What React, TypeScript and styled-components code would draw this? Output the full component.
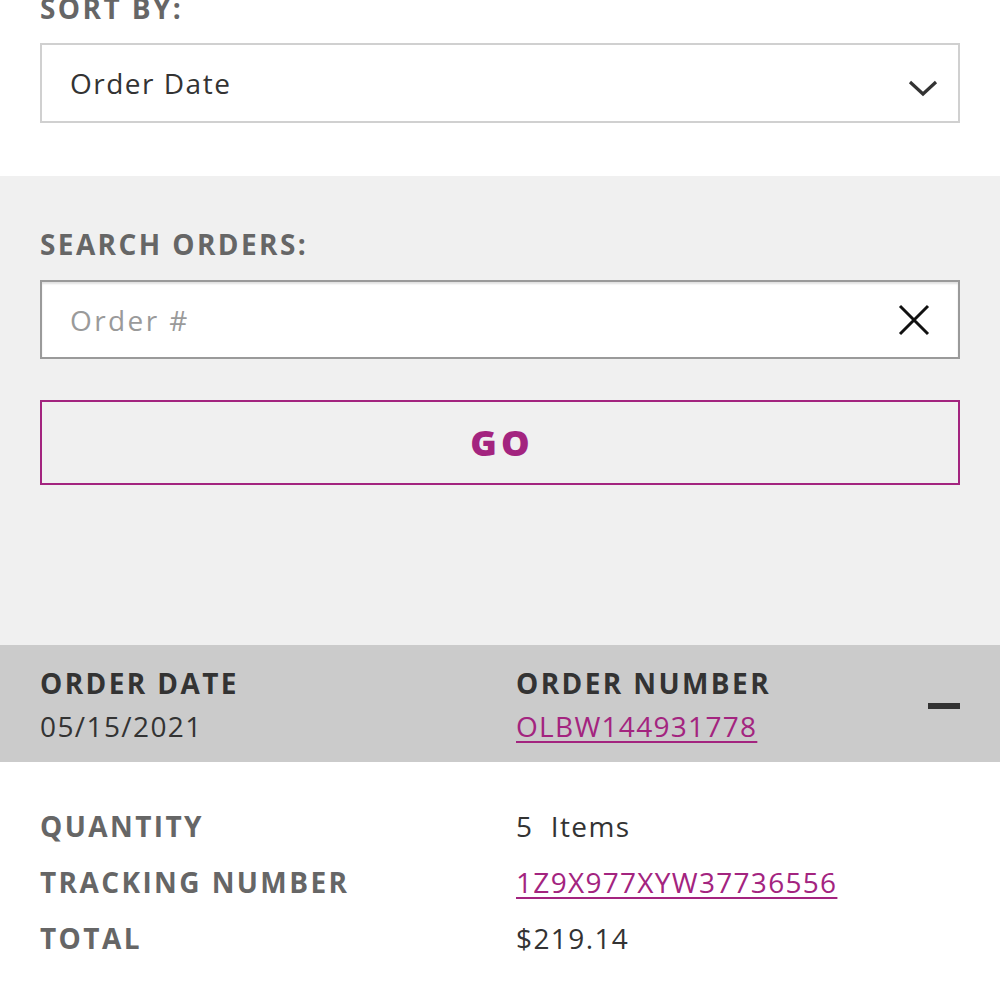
import React, { useState } from "react";
import styled, { createGlobalStyle } from "styled-components";

const GlobalStyle = createGlobalStyle`
  body {
    margin: 0;
    background: #ffffff;
    font-family: "Open Sans", "Liberation Sans", sans-serif;
  }
`;

const PURPLE = "#a3247f";

const Page = styled.div`
  width: 1000px;
  overflow: hidden;
`;

const SortSection = styled.div`
  margin-top: -10px;
  padding: 0 40px 53px;
`;

const Label = styled.div<{ $tone?: string }>`
  font-size: 28px;
  font-weight: 700;
  line-height: 36px;
  letter-spacing: 2.4px;
  color: ${(p) => p.$tone || "#666666"};
`;

const SelectBox = styled.div`
  margin-top: 17px;
  height: 76px;
  border: 2px solid #d0d0d0;
  background: #fff;
  display: flex;
  align-items: center;
  justify-content: space-between;
  padding: 0 20px 0 28px;
`;

const BoxText = styled.span<{ $placeholder?: boolean }>`
  font-size: 28px;
  letter-spacing: ${(p) => (p.$placeholder ? "2.4px" : "1.5px")};
  color: ${(p) => (p.$placeholder ? "#9a9a9a" : "#333333")};
`;

const SearchSection = styled.div`
  background: #f0f0f0;
  padding: 50px 40px 160px;
`;

const SearchInput = styled.div`
  margin-top: 18px;
  height: 75px;
  border: 2px solid #9a9a9a;
  background: #fff;
  display: flex;
  align-items: center;
  justify-content: space-between;
  padding: 0 28px 0 28px;
  box-shadow: inset 0 2px 2px rgba(0, 0, 0, 0.12);
`;

const GoButton = styled.button`
  display: block;
  width: 100%;
  margin-top: 41px;
  height: 85px;
  border: 2px solid ${PURPLE};
  background: transparent;
  color: ${PURPLE};
  font-family: inherit;
  font-size: 36px;
  font-weight: 800;
  letter-spacing: 4px;
  padding: 0 0 0 4px;
  cursor: pointer;
`;

const OrderHeader = styled.div`
  background: #cbcbcb;
  height: 117px;
  box-sizing: border-box;
  padding: 20px 40px 0;
  display: grid;
  grid-template-columns: 476px 1fr 32px;
  align-items: start;
`;

const HeaderCol = styled.div`
  display: flex;
  flex-direction: column;
  gap: 4px;
`;

const Value = styled.span`
  font-size: 28px;
  line-height: 42px;
  letter-spacing: 1.4px;
  color: #333333;
`;

const LinkValue = styled.a`
  font-size: 28px;
  line-height: 42px;
  letter-spacing: 1.3px;
  color: ${PURPLE};
  text-decoration: underline;
  text-underline-offset: 4px;
  text-decoration-thickness: 2px;
`;

const MinusBar = styled.div`
  width: 32px;
  height: 6px;
  background: #333333;
  margin-top: 38px;
`;

const Details = styled.div`
  padding: 36px 40px 30px;
  display: grid;
  grid-template-columns: 476px 1fr;
  grid-auto-rows: 56px;
  align-items: center;
`;

const IconSlot = styled.span<{ $shift?: number }>`
  display: flex;
  margin-top: ${(p) => p.$shift || 0}px;
`;

const ChevronDown = () => (
  <svg width="30" height="18" viewBox="0 0 30 18" fill="none">
    <path d="M2 3 L15 15 L28 3" stroke="#333" strokeWidth="3.2" />
  </svg>
);

const CloseIcon = () => (
  <svg width="32" height="32" viewBox="0 0 32 32" fill="none">
    <path d="M2 2 L30 30 M30 2 L2 30" stroke="#111" strokeWidth="3" />
  </svg>
);

export default function App() {
  const [open, setOpen] = useState(true);

  return (
    <Page>
      <GlobalStyle />
      <SortSection>
        <Label>SORT BY:</Label>
        <SelectBox>
          <BoxText>Order Date</BoxText>
          <IconSlot $shift={9}>
            <ChevronDown />
          </IconSlot>
        </SelectBox>
      </SortSection>

      <SearchSection>
        <Label>SEARCH ORDERS:</Label>
        <SearchInput>
          <BoxText $placeholder>Order #</BoxText>
          <IconSlot>
            <CloseIcon />
          </IconSlot>
        </SearchInput>
        <GoButton>GO</GoButton>
      </SearchSection>

      <OrderHeader onClick={() => setOpen(!open)}>
        <HeaderCol>
          <Label $tone="#333333">ORDER DATE</Label>
          <Value>05/15/2021</Value>
        </HeaderCol>
        <HeaderCol>
          <Label $tone="#333333">ORDER NUMBER</Label>
          <LinkValue href="#">OLBW144931778</LinkValue>
        </HeaderCol>
        <MinusBar />
      </OrderHeader>

      {open && (
        <Details>
          <Label>QUANTITY</Label>
          <Value>5&nbsp;&nbsp;Items</Value>
          <Label>TRACKING NUMBER</Label>
          <LinkValue href="#">1Z9X977XYW37736556</LinkValue>
          <Label>TOTAL</Label>
          <Value>$219.14</Value>
        </Details>
      )}
    </Page>
  );
}
